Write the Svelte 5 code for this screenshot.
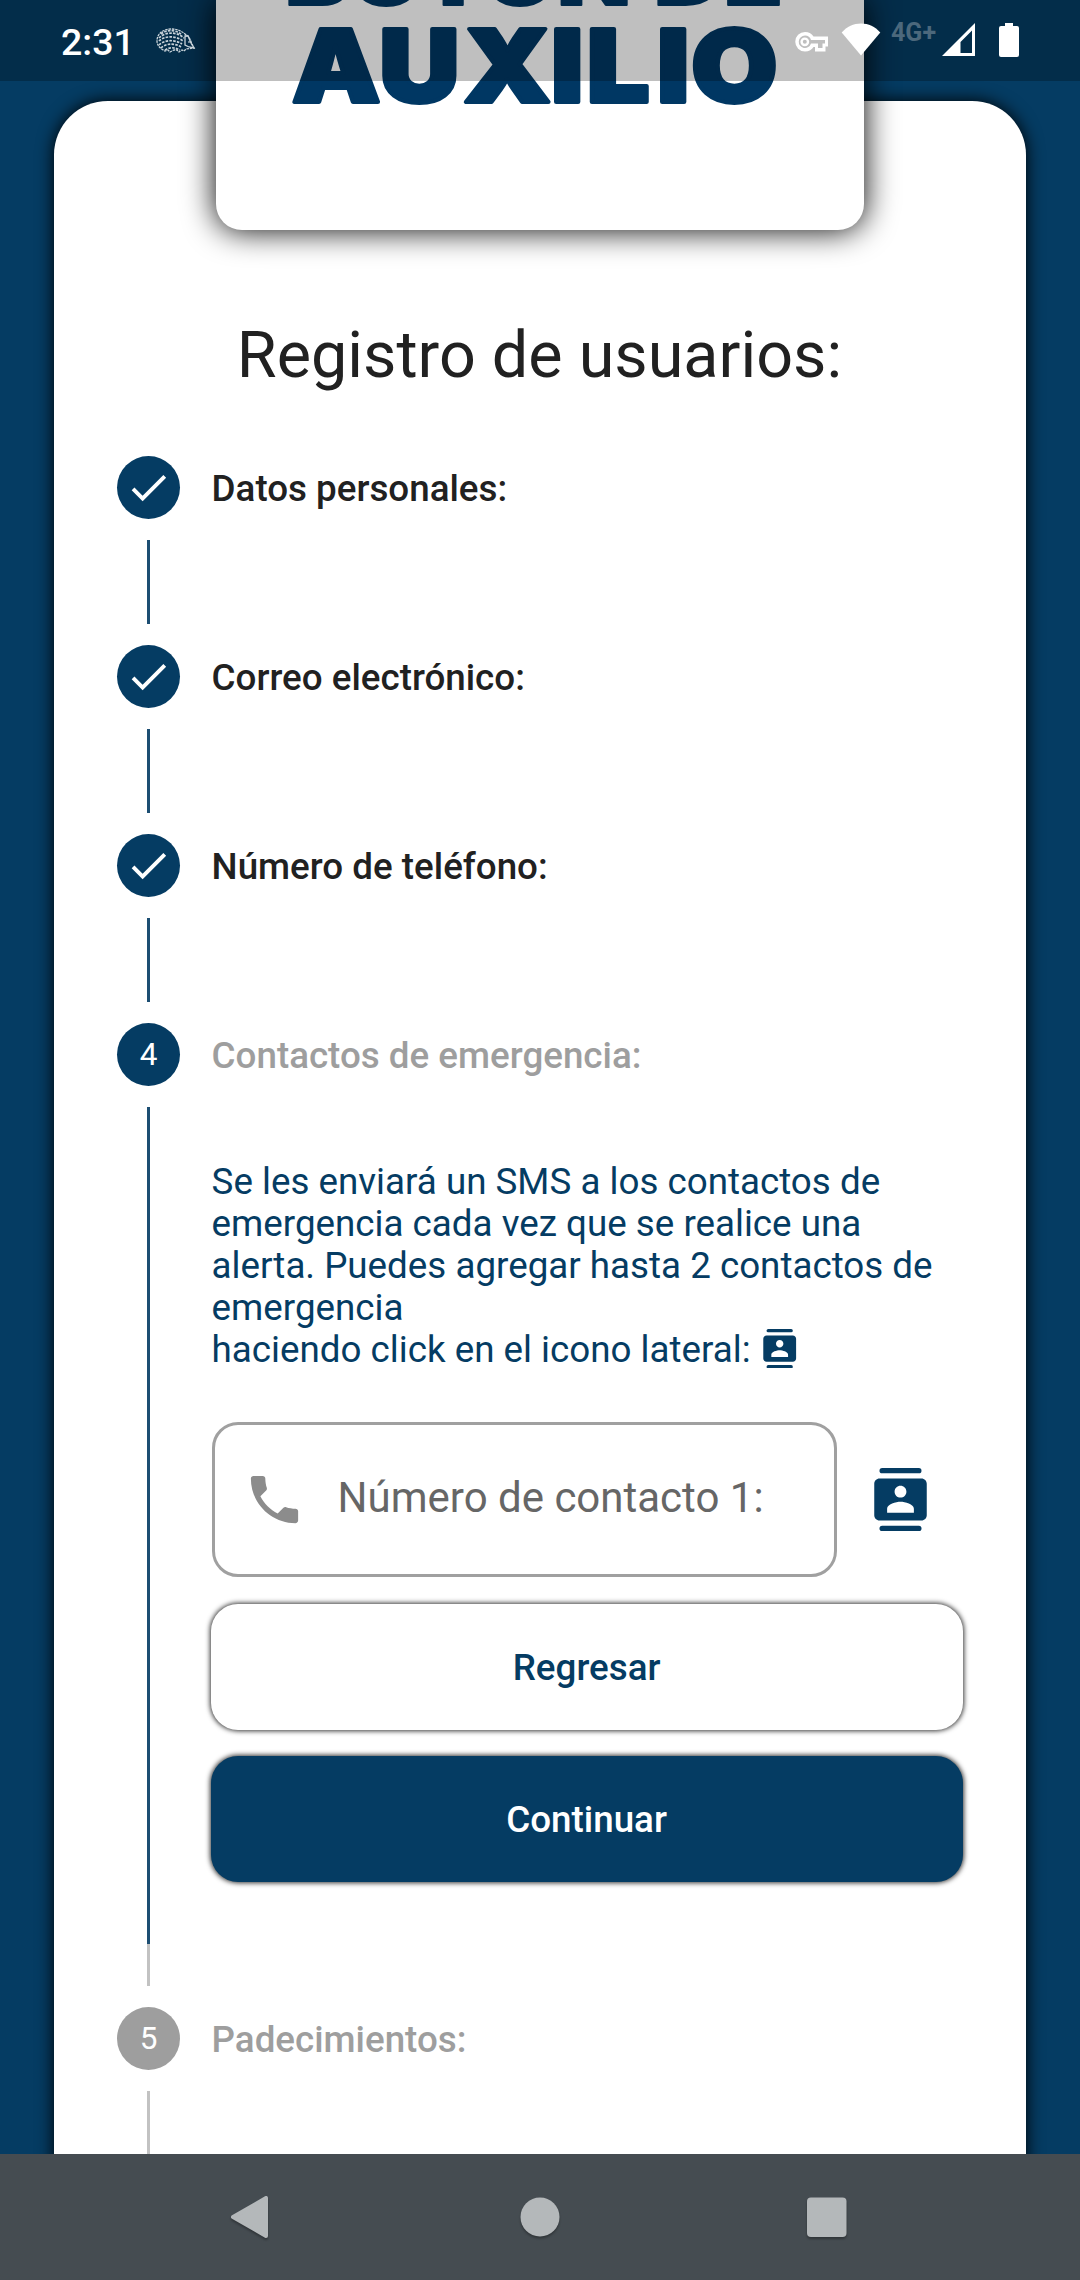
<script>
  const navy = '#053c63';
  const doneSteps = ['Datos personales:', 'Correo electrónico:', 'Número de teléfono:'];
</script>

{#snippet contacts(cls)}
  <svg class={cls} viewBox="0 0 24 24" fill={navy} aria-hidden="true">
    <rect x="4" y="0" width="16" height="2" rx="1" />
    <rect x="4" y="22" width="16" height="2" rx="1" />
    <path fill-rule="evenodd" d="M20 4H4c-1.1 0-2 .9-2 2v12c0 1.1.9 2 2 2h16c1.1 0 2-.9 2-2V6c0-1.1-.9-2-2-2zm-8 2.75c1.24 0 2.25 1.01 2.25 2.25s-1.01 2.25-2.25 2.25S9.75 10.24 9.75 9 10.76 6.75 12 6.75zM17.100 17H6.900v-1.500c0-1.670 3.400-2.600 5.100-2.600s5.100.93 5.100 2.600V17z" />
  </svg>
{/snippet}

<div class="screen">
  <main class="card">
    <h1>Registro de usuarios:</h1>

    {#each doneSteps as label}
      <section class="step">
        <div class="rail">
          <span class="dot">
            <svg viewBox="0 0 24 24" class="check" aria-hidden="true"><path d="M9 16.170L4.830 12l-1.420 1.410L9 19 21 7l-1.410-1.410z" /></svg>
          </span>
          <i class="line short"></i>
        </div>
        <h2>{label}</h2>
      </section>
    {/each}

    <section class="step current">
      <div class="rail">
        <span class="dot">4</span>
        <i class="line long"></i>
        <i class="line pending"></i>
      </div>
      <div class="content">
        <h2 class="muted">Contactos de emergencia:</h2>
        <p>
          Se les enviará un SMS a los contactos de<br />emergencia cada vez que se realice una<br />alerta. Puedes agregar hasta 2 contactos de<br />emergencia<br />haciendo click en el icono lateral: {@render contacts('inline-icon')}
        </p>
        <div class="field-row">
          <div class="field">
            <svg viewBox="0 0 24 24" class="phone" aria-hidden="true"><path d="M7.500 3H4c-.55 0-1 .45-1 1 0 9.390 7.610 17 17 17 .55 0 1-.45 1-1v-3.490c0-.55-.45-1-1-1-1.240 0-2.450-.2-3.570-.57-.1-.04-.21-.05-.31-.05-.26 0-.51.1-.71.29l-2.200 2.200c-2.830-1.450-5.150-3.760-6.590-6.590l2.200-2.200c.28-.28.36-.67.25-1.020C8.700 6.450 8.500 5.250 8.500 4c0-.55-.45-1-1-1z" /></svg>
            <span>Número de contacto 1:</span>
          </div>
          {@render contacts('big-icon')}
        </div>
        <button class="btn ghost">Regresar</button>
        <button class="btn solid">Continuar</button>
      </div>
    </section>

    <section class="step">
      <div class="rail">
        <span class="dot grey">5</span>
        <i class="line short pale"></i>
      </div>
      <h2 class="muted">Padecimientos:</h2>
    </section>
  </main>

  <div class="logo">
    <svg viewBox="0 0 648 230" width="648" height="230" role="img" aria-label="Botón de auxilio">
      <g fill="#003763" stroke="#003763" stroke-linejoin="round">
        <text x="69" y="5" font-size="84" stroke-width="2" textLength="346" lengthAdjust="spacingAndGlyphs">BOTÓN</text>
        <text x="438" y="5" font-size="84" stroke-width="2" textLength="129" lengthAdjust="spacingAndGlyphs">DE</text>
        <text transform="scale(1.1 1)" x="69 148.500 225 304.500 337 401 432" y="102.500" font-size="101" stroke-width="4">AUXILIO</text>
      </g>
    </svg>
  </div>

  <header class="status">
    <span class="time">2:31</span>
    <svg class="hedgehog" viewBox="0 0 40 26" width="40" height="26" fill="none" aria-hidden="true">
      <path d="M30 7c-4-4-9-6-15-6C7 1 1 6 1 13c0 5 4 8 8 10l3-1 2 2 4-2h3l2 2 3-2 2 1 2-2 8-1-2-4-3-7-2-2-1 1z" stroke="#c9d3da" stroke-width="1.300" stroke-dasharray="2.500 .8" />
      <path d="M5 6c5-4 13-5 20 0M3 10c6-6 17-7 25 0M3 13c5-5 16-6 24 0M3 17c5-5 15-6 23-1M5 20c5-5 14-5 20-1M9 22c4-3 9-3 15 0" stroke="#c9d3da" stroke-width="1.700" stroke-dasharray="2.600 1.200" />
      <path d="M29 8v9l4 2 5 1-3-5-3-7z" stroke="#c9d3da" stroke-width="1.300" />
      <circle cx="33" cy="14" r=".8" fill="#fff" />
    </svg>
    <div class="indicators">
      <svg class="key" viewBox="0 0 34 20" width="34" height="20" aria-hidden="true">
        <path fill="#fff" fill-rule="evenodd" d="M10 0c4 0 7 2 8.500 4.500H33V14.500h-2.500V19.500H20V15h-1.500C17 17.500 14 19.500 10 19.500a9.750 9.750 0 1 1 0-19.500zM10 3.500a6.250 6.250 0 1 0 6 8h7v4.500h4.500V11.500H30V8H16A6.250 6.250 0 0 0 10 3.500z" />
        <circle cx="9.800" cy="9.800" r="3.200" fill="none" stroke="#fff" stroke-width="2.400" />
      </svg>
      <svg class="wifi" viewBox="0 0 40 33" width="40" height="33" aria-hidden="true"><path fill="#fff" d="M.7 9.500C6 3.500 12.500.5 20 .5s14 3 19.300 9L20 32.500z" /></svg>
      <span class="net">4G+</span>
      <svg class="signal" viewBox="0 0 33 33" width="33" height="33" aria-hidden="true"><path fill="#fff" fill-rule="evenodd" d="M33 0v33H0zM30 7.500L18.500 19v11H30z" /></svg>
      <svg class="battery" viewBox="0 0 20 34" width="20" height="34" aria-hidden="true"><path fill="#fff" d="M6 0h8v3h4a2 2 0 0 1 2 2v27a2 2 0 0 1-2 2H2a2 2 0 0 1-2-2V5a2 2 0 0 1 2-2h4z" /></svg>
    </div>
  </header>

  <nav class="navbar">
    <svg viewBox="0 0 48 48" width="48" height="48" aria-label="Atrás"><path d="M5 24L38 5v38z" stroke-width="4" stroke-linejoin="round" /></svg>
    <svg viewBox="0 0 48 48" width="48" height="48" aria-label="Inicio"><circle cx="24" cy="24" r="19.500" stroke="none" /></svg>
    <svg viewBox="0 0 48 48" width="48" height="48" aria-label="Recientes"><rect x="4" y="4.500" width="39.500" height="39.500" rx="4" stroke="none" /></svg>
  </nav>
</div>

<style>
  :global(body) { margin: 0; }
  .screen {
    position: relative;
    width: 1080px;
    height: 2280px;
    overflow: hidden;
    background: #053c63;
    font-family: Roboto, "Liberation Sans", sans-serif;
    color: #212121;
    padding: 101px 54px 0;
    box-sizing: border-box;
  }
  .card {
    box-sizing: border-box;
    height: 2200px;
    padding: 210px 62px 0 63px;
    background: #fff;
    border-radius: 54px 54px 0 0;
    box-shadow: 0 0 17px #000;
  }
  h1 {
    margin: 0 2px 57px 0;
    height: 88px;
    line-height: 88px;
    font-size: 64.700px;
    font-weight: 400;
    text-align: center;
    white-space: nowrap;
  }
  .step { display: flex; gap: 31.600px; height: 189px; }
  .step.current { height: 984px; }
  .rail { display: flex; flex-direction: column; align-items: center; width: 63px; flex: none; }
  .dot {
    display: flex;
    align-items: center;
    justify-content: center;
    width: 63px;
    height: 63px;
    margin-bottom: 21px;
    border-radius: 50%;
    background: #053c63;
    color: #fff;
    font-size: 31.500px;
    flex: none;
  }
  .dot.grey { background: #9e9e9e; }
  .check { width: 47px; height: 47px; fill: #fff; }
  .line { width: 3px; background: #1c4e72; flex: none; }
  .short { height: 84px; }
  .long { height: 837px; }
  .pending { height: 42px; background: #c2c2c2; }
  .pale { background: #c2c2c2; }
  h2 { margin: 0; height: 63px; line-height: 66px; font-size: 36.750px; font-weight: 500; white-space: nowrap; }
  .muted { color: #9e9e9e; }
  .content { flex: 1; display: flex; flex-direction: column; align-items: stretch; }
  p { margin: 75px 0 0; height: 261px; font-size: 36.750px; line-height: 42px; color: #053c63; white-space: nowrap; }
  p :global(.inline-icon) { width: 39.400px; height: 39.400px; vertical-align: -6px; }
  .field-row { display: flex; align-items: center; gap: 32px; height: 155px; }
  .field {
    box-sizing: border-box;
    display: flex;
    align-items: center;
    gap: 32px;
    width: 625px;
    height: 155px;
    padding: 0 0 1px 28px;
    border: 3px solid #a0a0a0;
    border-radius: 26px;
    font-size: 42px;
    color: #666;
    white-space: nowrap;
  }
  .field span { padding-bottom: 4px; }
  .phone { width: 63px; height: 63px; fill: #8c8c8c; }
  .field-row :global(.big-icon) { width: 63px; height: 63px; margin-bottom: 1px; }
  .btn {
    box-sizing: border-box;
    height: 126px;
    width: 752px;
    margin: 26px 0 0 -1px;
    padding: 0;
    border: 0;
    border-radius: 27px;
    box-shadow: 0 0 5px 1px rgba(0, 0, 0, .8);
    font: 500 36.750px/128px Roboto, "Liberation Sans", sans-serif;
    text-align: center;
  }
  .ghost { margin-top: 27px; background: #fff; color: #053c63; }
  .solid { background: #053c63; color: #fff; }
  .logo {
    position: absolute;
    top: 0;
    left: 216px;
    width: 648px;
    height: 230px;
    border-radius: 0 0 26px 26px;
    background: #fff;
    box-shadow: 0 0 32px #000;
  }
  .logo svg { display: block; }
  .logo text { font-family: Inter, "Liberation Sans", sans-serif; font-weight: 900; }
  .status {
    position: absolute;
    inset: 0 0 auto;
    display: flex;
    align-items: flex-start;
    height: 81px;
    padding: 0 61px 0 61px;
    box-sizing: border-box;
    background: rgba(0, 0, 0, .25);
    color: #fff;
  }
  .time { width: 95px; line-height: 84px; font-size: 37.500px; font-weight: 500; }
  .hedgehog { margin-top: 28px; }
  .indicators { display: flex; align-items: flex-start; margin-left: auto; }
  .key { margin: 32px 12px 0 0; }
  .wifi { margin: 23px 10px 0 0; }
  .net { width: 51px; padding-top: 19px; line-height: 28px; font-size: 25px; font-weight: 700; color: #4c687c; }
  .signal { margin: 23px 24px 0 0; }
  .battery { margin-top: 23px; }
  .navbar {
    position: absolute;
    inset: auto 0 0;
    display: flex;
    align-items: center;
    justify-content: space-between;
    height: 126px;
    padding: 0 229px 0 228px;
    box-sizing: border-box;
    background: #454c51;
  }
  .navbar svg { fill: #b4b8ba; stroke: #b4b8ba; filter: drop-shadow(0 2px 1px rgba(0, 0, 0, .3)); }
</style>
